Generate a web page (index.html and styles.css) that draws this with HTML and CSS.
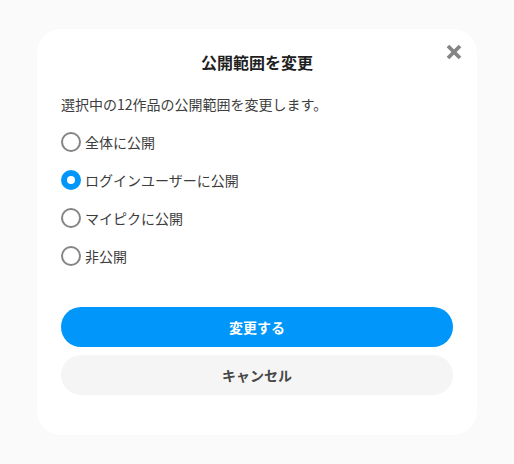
FILE: index.html
```html
<!DOCTYPE html>
<html lang="ja">
<head>
<meta charset="utf-8">
<link rel="stylesheet" href="styles.css">
</head>
<body>
<div class="dialog">
  <button class="close" aria-label="閉じる">
    <svg width="16" height="16" viewBox="0 0 16 16"><path d="M2 2 L14 14 M14 2 L2 14" stroke="#858585" stroke-width="3.8" stroke-linecap="butt"/></svg>
  </button>
  <h1 class="title">公開範囲を変更</h1>
  <p class="desc">選択中の12作品の公開範囲を変更します。</p>
  <div class="options">
    <label class="option"><span class="radio"></span><span class="label">全体に公開</span></label>
    <label class="option"><span class="radio checked"></span><span class="label">ログインユーザーに公開</span></label>
    <label class="option"><span class="radio"></span><span class="label">マイピクに公開</span></label>
    <label class="option"><span class="radio"></span><span class="label">非公開</span></label>
  </div>
  <div class="actions">
    <button class="btn primary">変更する</button>
    <button class="btn secondary">キャンセル</button>
  </div>
</div>
</body>
</html>
```
FILE: styles.css
```css
html, body {
  margin: 0;
  padding: 0;
  background: #fafafa;
  font-family: "Noto Sans CJK JP", "Noto Sans", sans-serif;
}
body {
  padding: 29px 0 0 37px;
}
.dialog {
  position: relative;
  box-sizing: border-box;
  width: 440px;
  height: 406px;
  background: #ffffff;
  border-radius: 24px;
  padding: 21px 24px 40px;
  display: flex;
  flex-direction: column;
}
.close {
  position: absolute;
  top: 15px;
  right: 15px;
  width: 16px;
  height: 16px;
  padding: 0;
  margin: 0;
  border: 0;
  background: none;
  display: block;
  line-height: 0;
}
.close svg {
  display: block;
}
.title {
  margin: 0;
  font-size: 16px;
  line-height: 24px;
  font-weight: 700;
  color: #1f1f1f;
  text-align: center;
}
.desc {
  margin: 19px 0 0;
  font-size: 14px;
  line-height: 22px;
  color: #3d3d3d;
}
.options {
  margin-top: 8px;
  display: flex;
  flex-direction: column;
}
.option {
  height: 38px;
  display: flex;
  align-items: center;
  gap: 4px;
}
.radio {
  box-sizing: border-box;
  width: 20px;
  height: 20px;
  border-radius: 50%;
  border: 2px solid #858585;
  flex: none;
}
.radio.checked {
  border: 6px solid #0096fa;
  background: #ffffff;
}
.label {
  font-size: 14px;
  line-height: 22px;
  color: #3d3d3d;
}
.actions {
  margin-top: 32px;
  display: flex;
  flex-direction: column;
  gap: 8px;
}
.btn {
  height: 40px;
  border: 0;
  border-radius: 20px;
  font-family: inherit;
  font-size: 14px;
  font-weight: 700;
  padding: 0;
}
.primary {
  background: #0096fa;
  color: #ffffff;
}
.secondary {
  background: #f5f5f5;
  color: #474747;
}
```
